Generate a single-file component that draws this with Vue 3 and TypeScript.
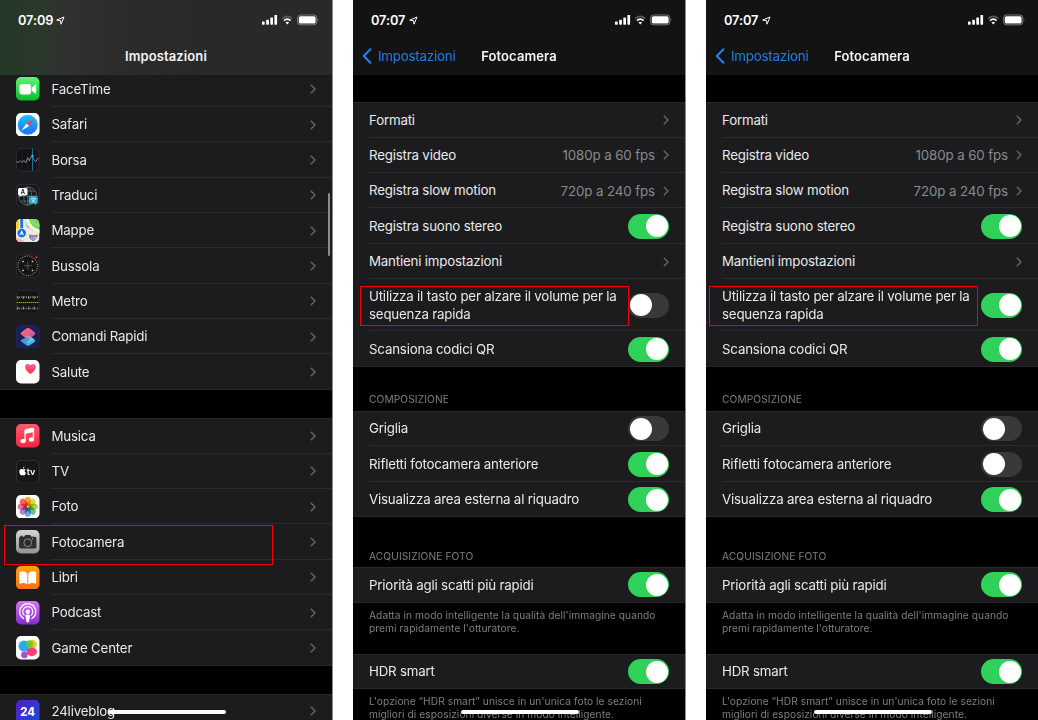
<script setup lang="ts">
interface SettingRow {
  label: string
  value?: string
  on?: boolean
  kind: 'link' | 'toggle'
  tall?: boolean
}

interface Section {
  key: string
  title?: string
  footer?: string[]
  rows: SettingRow[]
}

interface AppEntry {
  name: string
  icon: string
}

const appGroups: { key: string; apps: AppEntry[] }[] = [
  {
    key: 'first',
    apps: [
      { name: 'FaceTime', icon: 'facetime' },
      { name: 'Safari', icon: 'safari' },
      { name: 'Borsa', icon: 'stocks' },
      { name: 'Traduci', icon: 'translate' },
      { name: 'Mappe', icon: 'maps' },
      { name: 'Bussola', icon: 'compass' },
      { name: 'Metro', icon: 'measure' },
      { name: 'Comandi Rapidi', icon: 'shortcuts' },
      { name: 'Salute', icon: 'health' },
    ],
  },
  {
    key: 'second',
    apps: [
      { name: 'Musica', icon: 'music' },
      { name: 'TV', icon: 'tv' },
      { name: 'Foto', icon: 'photos' },
      { name: 'Fotocamera', icon: 'camera' },
      { name: 'Libri', icon: 'books' },
      { name: 'Podcast', icon: 'podcast' },
      { name: 'Game Center', icon: 'games' },
    ],
  },
  { key: 'third', apps: [{ name: '24liveblog', icon: 'liveblog' }] },
]

const petals = [
  { angle: 0, color: '#fba01c' },
  { angle: 45, color: '#e2d32c' },
  { angle: 90, color: '#9ccb45' },
  { angle: 135, color: '#55b98f' },
  { angle: 180, color: '#5b9fdc' },
  { angle: 225, color: '#9a7cc4' },
  { angle: 270, color: '#e4648c' },
  { angle: 315, color: '#f2553c' },
]

const link = (label: string, value?: string): SettingRow => ({ label, value, kind: 'link' })
const toggle = (label: string, on: boolean, tall = false): SettingRow => ({ label, on, tall, kind: 'toggle' })

function cameraSections(volumeBurst: boolean, mirror: boolean): Section[] {
  return [
    {
      key: 'general',
      rows: [
        link('Formati'),
        link('Registra video', '1080p a 60 fps'),
        link('Registra slow motion', '720p a 240 fps'),
        toggle('Registra suono stereo', true),
        link('Mantieni impostazioni'),
        toggle('Utilizza il tasto per alzare il volume per la sequenza rapida', volumeBurst, true),
        toggle('Scansiona codici QR', true),
      ],
    },
    {
      key: 'composition',
      title: 'COMPOSIZIONE',
      rows: [
        toggle('Griglia', false),
        toggle('Rifletti fotocamera anteriore', mirror),
        toggle('Visualizza area esterna al riquadro', true),
      ],
    },
    {
      key: 'capture',
      title: 'ACQUISIZIONE FOTO',
      rows: [toggle('Priorità agli scatti più rapidi', true)],
      footer: ["Adatta in modo intelligente la qualità dell'immagine quando", "premi rapidamente l'otturatore."],
    },
    {
      key: 'hdr',
      rows: [toggle('HDR smart', true)],
      footer: ["L'opzione “HDR smart” unisce in un'unica foto le sezioni", 'migliori di esposizioni diverse in modo intelligente.'],
    },
  ]
}

const phones = [
  { key: 'list', time: '07:09', sections: [] as Section[] },
  { key: 'before', time: '07:07', sections: cameraSections(false, true) },
  { key: 'after', time: '07:07', sections: cameraSections(true, false) },
]
</script>

<template>
  <main class="board">
    <section v-for="phone in phones" :key="phone.key" class="phone" :class="phone.key">
      <header class="top">
        <div class="status">
          <span class="time">{{ phone.time }}</span>
          <svg class="arrow" viewBox="0 0 9 9"><path d="M.7 4.1 8 1 5 8.2 4.5 4.7Z" fill="none" stroke="#fff" stroke-width="1" stroke-linejoin="round" /></svg>
          <svg class="radios" viewBox="0 0 58 12">
            <g fill="#fff">
              <rect x="0" y="7.5" width="2.7" height="3.2" rx=".6" />
              <rect x="4.2" y="5.7" width="2.7" height="5" rx=".6" />
              <rect x="8.3" y="3.4" width="2.7" height="7.3" rx=".6" />
              <rect x="12.4" y="1" width="2.7" height="9.7" rx=".6" />
            </g>
            <path d="M20.3 4.7q5-4.5 10 0" fill="none" stroke="#5a5a5b" stroke-width="1.6" />
            <path d="M22 6.7q3.3-3 6.6 0" fill="none" stroke="#fff" stroke-width="1.6" />
            <path d="M23.5 8.6q1.8-1.5 3.6 0l-1.8 1.9z" fill="#fff" />
            <rect x="35.6" y="1" width="19.2" height="9.8" rx="2.8" fill="none" stroke="#858586" stroke-width=".9" />
            <rect x="36.8" y="2.2" width="16.8" height="7.4" rx="1.6" fill="#fff" />
            <path d="M55.8 4.2q1.3 1.6 0 3.2z" fill="#858586" />
          </svg>
        </div>
        <div class="nav">
          <div v-if="phone.key !== 'list'" class="back">
            <svg viewBox="0 0 10 16"><path d="M8.4 1.3 1.8 8l6.6 6.7" fill="none" stroke="#1f84f5" stroke-width="2" stroke-linecap="round" stroke-linejoin="round" /></svg>
            <span>Impostazioni</span>
          </div>
          <h1>{{ phone.key === 'list' ? 'Impostazioni' : 'Fotocamera' }}</h1>
        </div>
      </header>

      <div v-if="phone.key === 'list'" class="content">
        <ul v-for="group in appGroups" :key="group.key" class="group apps" :class="group.key">
          <li v-for="app in group.apps" :key="app.name" class="row">
            <svg class="icon" viewBox="0 0 70 70">
              <template v-if="app.icon === 'facetime'">
                <defs><linearGradient id="gFace" x2="0" y2="1"><stop stop-color="#5df777" /><stop offset="1" stop-color="#0abd29" /></linearGradient></defs>
                <rect width="70" height="70" rx="15" fill="url(#gFace)" />
                <rect x="10" y="21" width="35" height="31" rx="9" fill="#fff" />
                <path d="M47 32 58 22q2-1 2 2v24q0 3-2 2L47 41z" fill="#fff" />
              </template>
              <template v-else-if="app.icon === 'safari'">
                <defs><linearGradient id="gSaf" x2="0" y2="1"><stop stop-color="#1bc4fa" /><stop offset="1" stop-color="#1a6df0" /></linearGradient></defs>
                <rect width="70" height="70" rx="15" fill="#fff" />
                <circle cx="35" cy="35" r="30" fill="url(#gSaf)" />
                <circle cx="35" cy="35" r="27" fill="none" stroke="#a9dcff" stroke-width="3" stroke-dasharray="1 3" opacity=".4" />
                <path d="M54 17 31 31l8 8z" fill="#fb3d3d" />
                <path d="M16 53 31 31l8 8z" fill="#fff" />
              </template>
              <template v-else-if="app.icon === 'stocks'">
                <rect x="1" y="1" width="68" height="68" rx="15" fill="#111214" stroke="#3b3b3d" stroke-width="2" />
                <path d="M18 2v66M34 2v66M62 6v58" stroke="#292a2c" stroke-width="2" />
                <path d="M1 42h7l5-4 5 5 5-6 6 7 6-15 5 9 4-11 5-1 5 10 5 5 4-8 5-3" fill="none" stroke="#b6b6b8" stroke-width="2" />
                <path d="M49 2v66" stroke="#167ca3" stroke-width="3" /><circle cx="49" cy="24" r="4" fill="#2cb2e5" />
              </template>
              <template v-else-if="app.icon === 'translate'">
                <rect x="1" y="1" width="68" height="68" rx="15" fill="#17181a" stroke="#3b3b3d" stroke-width="2" />
                <g fill="none" stroke="#5f8490" stroke-width="2"><circle cx="35" cy="36" r="27" /><ellipse cx="35" cy="36" rx="12" ry="27" /><path d="M35 9v54M8 36h54M13 21h44M13 51h44" /></g>
                <path d="M11 12h18q5 0 5 5v12q0 5-5 5H17l-7 5 1-5q-5 0-5-5V17q0-5 5-5z" fill="#fff" />
                <text x="14" y="30" class="mini-a">A</text>
                <path d="M43 36h17q5 0 5 5v13q0 5-5 5l1 5-7-5H43q-5 0-5-5V41q0-5 5-5z" fill="#32acc9" />
                <path d="M45 44h14M52 40v4M47 54q8-2 10-10M47 46q3 6 10 8" fill="none" stroke="#e5faff" stroke-width="2" />
              </template>
              <template v-else-if="app.icon === 'maps'">
                <defs><clipPath id="cMap"><rect width="70" height="70" rx="15" /></clipPath></defs>
                <g clip-path="url(#cMap)">
                  <rect width="70" height="70" fill="#eeeae0" />
                  <path d="M0 0h12v30H0z" fill="#fcd036" /><path d="M26 0h44v42L50 36 32 23z" fill="#77d35b" />
                  <path d="M32-3Q38 31 73 38" fill="none" stroke="#e9f7dc" stroke-width="11" />
                  <path d="M44-4Q49 17 73 21" fill="none" stroke="#8bdd74" stroke-width="7" />
                  <path d="M17 0v40" stroke="#fff" stroke-width="14" /><path d="M17 0v40" stroke="#167be8" stroke-width="9" />
                  <path d="M0 56q16 2 26 14H0z" fill="#f4abc2" />
                  <circle cx="17" cy="42" r="14" fill="#1672df" stroke="#fff" stroke-width="2" /><path d="m17 33 7 16-7-4-7 4z" fill="#fff" />
                  <path d="M38 48q3-5 6-2 8 4 15 0 4-2 6 2 1 13-14 19-14-6-13-19z" fill="#3e80d5" stroke="#fff" stroke-width="1.5" /><path d="M40 50h24" stroke="#ef655d" stroke-width="5" /><path d="M46 54v7M50 54h4v3h-4v4h4M60 54h-3v7h3z" stroke="#fff" stroke-width="1.5" fill="none" />
                </g>
              </template>
              <template v-else-if="app.icon === 'compass'">
                <rect x="1" y="1" width="68" height="68" rx="15" fill="#151516" stroke="#3b3b3d" stroke-width="2" />
                <circle cx="35" cy="35" r="29" fill="none" stroke="#a8a8a9" stroke-width="3" stroke-dasharray="3 4" />
                <path d="M35 23v24M23 35h24" stroke="#737375" stroke-width="2" />
                <g fill="#c9c9ca"><circle cx="21" cy="22" r="2.5" /><circle cx="49" cy="22" r="2.5" /><circle cx="21" cy="49" r="2.5" /><circle cx="49" cy="49" r="2.5" /></g>
                <path d="m56 8 7-1v8z" fill="#f6353b" />
              </template>
              <template v-else-if="app.icon === 'measure'">
                <rect x="1" y="1" width="68" height="68" rx="15" fill="#151516" stroke="#3b3b3d" stroke-width="2" />
                <path d="M4 21h63M4 55h63" stroke="#a9a9ab" stroke-width="5" stroke-dasharray="2 3.4" />
                <path d="M6 19v8M22 19v8M38 19v8M54 19v8M6 49v9M22 49v9M38 49v9M54 49v9" stroke="#cecece" stroke-width="2" />
                <path d="M3 37h64" stroke="#d3a02b" stroke-width="3" stroke-dasharray="4 2" />
              </template>
              <template v-else-if="app.icon === 'shortcuts'">
                <defs>
                  <linearGradient id="gSh1" x2="1" y2="1"><stop stop-color="#fb7865" /><stop offset=".55" stop-color="#df5a91" /><stop offset="1" stop-color="#a951d8" /></linearGradient>
                  <linearGradient id="gSh2" x2="1"><stop stop-color="#2a8ce9" /><stop offset="1" stop-color="#46d2c0" /></linearGradient>
                </defs>
                <rect x="1" y="1" width="68" height="68" rx="15" fill="#1c1d59" stroke="#2b2d62" stroke-width="2" />
                <path d="M17 43q-6 4 0 8l15 10q4 2 8 0l15-10q5-4 0-8L41 32z" fill="url(#gSh2)" />
                <path d="m32 10-15 11q-6 5 0 9l19 14 19-14q5-5 0-9L40 10q-4-2-8 0z" fill="url(#gSh1)" />
                <path d="m35 31 18 11-14 11q-5 2-8-1l12-9-16-10z" fill="#85cfdc" opacity=".7" />
              </template>
              <template v-else-if="app.icon === 'health'">
                <defs><linearGradient id="gHe" x2="0" y2="1"><stop stop-color="#ff61a5" /><stop offset="1" stop-color="#fb2f3d" /></linearGradient></defs>
                <rect width="70" height="70" rx="15" fill="#fff" />
                <path d="M43 42Q27 31 27 21q0-9 8-9 5 0 8 4 3-4 8-4 8 0 8 9 0 10-16 21z" fill="url(#gHe)" />
              </template>
              <template v-else-if="app.icon === 'music'">
                <defs><linearGradient id="gMu" x2="0" y2="1"><stop stop-color="#fc5b70" /><stop offset="1" stop-color="#fa243e" /></linearGradient></defs>
                <rect width="70" height="70" rx="15" fill="url(#gMu)" />
                <path d="M27 51V22q0-4 4-5l18-4q3 0 3 3v29" fill="none" stroke="#fff" stroke-width="4" /><path d="M26 18 53 12v12l-27 6z" fill="#fff" />
                <ellipse cx="21" cy="51" rx="8" ry="6.5" fill="#fff" /><ellipse cx="46" cy="46" rx="8" ry="6.5" fill="#fff" />
              </template>
              <template v-else-if="app.icon === 'tv'">
                <rect x="1" y="1" width="68" height="68" rx="15" fill="#161617" stroke="#444446" stroke-width="2" />
                <path d="M20 26q5 0 5-6-5 1-5 6zm0 2q-3-2-6-1-6 3-4 11 3 8 7 8l3-1 4 1q4-1 6-7-5-3-4-7 0-2 3-4-4-3-9 0z" fill="#fff" />
                <text x="32" y="46" class="tv-mark">tv</text>
              </template>
              <template v-else-if="app.icon === 'photos'">
                <rect width="70" height="70" rx="15" fill="#fff" />
                <g class="flower"><rect v-for="p in petals" :key="p.angle" x="26" y="5" width="18" height="28" rx="9" :fill="p.color" :transform="`rotate(${p.angle} 35 35)`" opacity=".9" /></g>
              </template>
              <template v-else-if="app.icon === 'camera'">
                <defs><linearGradient id="gCam" x2="0" y2="1"><stop stop-color="#d5d5d6" /><stop offset="1" stop-color="#929294" /></linearGradient></defs>
                <rect width="70" height="70" rx="15" fill="url(#gCam)" />
                <path d="M13 20v-3h7v3h4l4-5h14l4 5h10q5 0 5 5v25q0 5-5 5H14q-5 0-5-5V25q0-4 4-5z" fill="#303033" />
                <circle cx="35" cy="38" r="11.5" fill="#29292b" stroke="#a0a0a2" stroke-width="2.4" /><circle cx="49" cy="26" r="2" fill="#eba72c" />
              </template>
              <template v-else-if="app.icon === 'books'">
                <defs><linearGradient id="gBo" x2="0" y2="1"><stop stop-color="#ffa20b" /><stop offset="1" stop-color="#fb6e14" /></linearGradient></defs>
                <rect width="70" height="70" rx="15" fill="url(#gBo)" />
                <path d="M33.5 22Q23 11 10 18v35q14-5 23.5 1zM36.5 22Q47 11 60 18v35q-14-5-23.5 1z" fill="#fff" />
              </template>
              <template v-else-if="app.icon === 'podcast'">
                <defs><linearGradient id="gPo" x2="0" y2="1"><stop stop-color="#d775f6" /><stop offset="1" stop-color="#852bc9" /></linearGradient></defs>
                <rect width="70" height="70" rx="15" fill="url(#gPo)" />
                <g fill="none" stroke="#fff" stroke-width="3.6"><path d="M24 53a24 24 0 1 1 22 0" /><path d="M25 43a15 15 0 1 1 20 0" /></g>
                <circle cx="35" cy="32" r="6.5" fill="#fff" /><path d="M28 44q0-4 7-4t7 4l-3 16q-1 4-4 4t-4-4z" fill="#fff" />
              </template>
              <template v-else-if="app.icon === 'games'">
                <rect width="70" height="70" rx="15" fill="#fff" />
                <circle cx="49" cy="25" r="13" fill="#f6c526" /><circle cx="25" cy="56" r="10" fill="#a84ee0" />
                <circle cx="24" cy="30" r="16.5" fill="#27a9f3" /><circle cx="40" cy="24" r="11" fill="#5dcb30" opacity=".85" />
                <ellipse cx="47" cy="47" rx="15.5" ry="13" fill="#fc3f71" />
              </template>
              <template v-else>
                <defs><linearGradient id="gLb" x2="1" y2="1"><stop stop-color="#541bc9" /><stop offset="1" stop-color="#1650d8" /></linearGradient></defs>
                <rect width="70" height="70" rx="15" fill="url(#gLb)" />
                <text x="35" y="49" class="lb-mark">24</text>
              </template>
            </svg>
            <div class="cell">
              <span class="label">{{ app.name }}</span>
              <svg class="chevron" viewBox="0 0 6 10"><path d="m.8.8 4.2 4.2-4.2 4.2" /></svg>
            </div>
          </li>
        </ul>
        <i class="scrollbar"></i>
      </div>

      <div v-else class="content">
        <div v-for="section in phone.sections" :key="section.key" class="section" :class="section.key">
          <h2 v-if="section.title">{{ section.title }}</h2>
          <ul class="group">
            <li v-for="row in section.rows" :key="row.label" class="row" :class="{ tall: row.tall }">
              <div class="cell">
                <span class="label">{{ row.label }}</span>
                <span v-if="row.value" class="value">{{ row.value }}</span>
                <svg v-if="row.kind === 'link'" class="chevron" viewBox="0 0 6 10"><path d="m.8.8 4.2 4.2-4.2 4.2" /></svg>
                <span v-else class="switch" :class="{ on: row.on }"><i></i></span>
              </div>
            </li>
          </ul>
          <p v-if="section.footer"><span v-for="line in section.footer" :key="line">{{ line }}</span></p>
        </div>
      </div>

      <i class="marker"></i>
      <i class="home"></i>
    </section>
  </main>
</template>

<style>
body {
  margin: 0;
  background: #fff;
  overflow: hidden;
}
</style>

<style scoped>
.board {
  display: flex;
  gap: 20px;
  width: 1039px;
  height: 720px;
  overflow: hidden;
  font-family: Inter, "Liberation Sans", sans-serif;
  color: #e9e9ea;
}
.phone {
  position: relative;
  box-sizing: border-box;
  flex: 0 0 333px;
  height: 720px;
  display: flex;
  flex-direction: column;
  overflow: hidden;
  background: #000;
  border-right: 1px solid #8b8b8c;
}
.top {
  position: relative;
  z-index: 1;
  flex: 0 0 74.5px;
  display: flex;
  flex-direction: column;
  background: #131313;
}
.list .top {
  background: linear-gradient(90deg, #253727 0, #29382a 38px, #303230 62px, #2c2c2d 110px, #29292a 200px, #29292a);
}
.status {
  display: flex;
  align-items: center;
  box-sizing: border-box;
  height: 40px;
  padding: 0 12px 0 18px;
}
.time {
  font-size: 12.8px;
  font-weight: 600;
  letter-spacing: -0.1px;
  color: #fff;
  width: 38px;
}
.arrow {
  width: 9px;
  height: 9px;
}
.radios {
  width: 58px;
  height: 12px;
  margin-left: auto;
}
.nav {
  position: relative;
  display: flex;
  align-items: center;
  justify-content: center;
  height: 32px;
}
h1 {
  margin: 0;
  font-size: 13px;
  font-weight: 600;
  letter-spacing: 0.1px;
  color: #f4f4f5;
}
.back {
  position: absolute;
  left: 9px;
  top: 0;
  height: 32px;
  display: flex;
  align-items: center;
  gap: 6px;
  font-size: 13.3px;
  letter-spacing: -0.2px;
  color: #1f7fe8;
}
.back svg {
  width: 10px;
  height: 16px;
}
.content {
  flex: 1;
  min-height: 0;
}
ul {
  list-style: none;
  margin: 0;
  padding: 0;
}
.group {
  background: #1c1c1e;
  box-shadow: 0 -1px 0 #29292b inset, 0 1px 0 #29292b inset;
}
.first {
  margin-top: -3px;
}
.second {
  margin-top: 28.6px;
}
.third {
  margin-top: 27.8px;
}
.row {
  display: flex;
  align-items: center;
  height: 35.36px;
  padding-left: 16px;
}
.row.tall {
  height: 52.3px;
}
.icon {
  width: 23.5px;
  height: 23.5px;
  margin-right: 12px;
  flex: none;
}
.cell {
  flex: 1;
  min-width: 0;
  height: 100%;
  box-sizing: border-box;
  display: flex;
  align-items: center;
  border-bottom: 1px solid #2b2b2d;
  padding-right: 16px;
}
.row:last-child .cell {
  border-color: transparent;
}
.label {
  font-size: 13.3px;
  line-height: 17.7px;
  letter-spacing: -0.19px;
  padding-top: 2px;
  white-space: nowrap;
}
.tall .label {
  width: 256px;
  margin-right: -24px;
  white-space: normal;
}
.value {
  margin-left: auto;
  padding-top: 1px;
  font-size: 13.3px;
  letter-spacing: -0.1px;
  color: #8a8a8e;
  white-space: nowrap;
}
.chevron {
  width: 6px;
  height: 10px;
  margin-left: auto;
  margin-top: 1px;
  fill: none;
  stroke: #626266;
  stroke-width: 1.5;
}
.value + .chevron {
  margin-left: 8px;
}
.switch {
  box-sizing: border-box;
  width: 41.4px;
  height: 25px;
  margin-left: auto;
  margin-top: 1px;
  margin-right: -0.4px;
  padding: 1.5px;
  border-radius: 13px;
  background: #39393c;
  display: flex;
  flex: none;
}
.switch.on {
  background: #30d158;
  justify-content: flex-end;
}
.switch i {
  width: 22px;
  height: 22px;
  border-radius: 50%;
  background: #fff;
}
.general {
  padding-top: 27.9px;
}
h2 {
  margin: 0;
  padding-left: 16px;
  font-size: 10.2px;
  line-height: 14px;
  font-weight: 400;
  letter-spacing: 0.1px;
  color: #7f7f84;
}
.composition h2 {
  padding-top: 25.6px;
  padding-bottom: 4.7px;
}
.capture h2 {
  padding-top: 31.8px;
  padding-bottom: 4.3px;
}
p {
  margin: 0;
  padding: 6px 0 0 16px;
  font-size: 10.2px;
  line-height: 13px;
  letter-spacing: 0.06px;
  color: #7f7f84;
}
p span {
  display: block;
  white-space: nowrap;
}
.capture p {
  height: 45.3px;
}
.scrollbar {
  position: absolute;
  left: 328px;
  top: 193px;
  width: 2px;
  height: 63px;
  border-radius: 1px;
  background: #8c8c8e;
}
.marker {
  position: absolute;
  z-index: 2;
  box-sizing: border-box;
  left: 7px;
  top: 286px;
  width: 269px;
  height: 40px;
  border: 1px solid #f50000;
}
.list .marker {
  left: 4px;
  top: 525px;
}
.after .marker {
  left: 3px;
}
.home {
  position: absolute;
  z-index: 2;
  left: 107.5px;
  top: 709.5px;
  width: 118px;
  height: 4px;
  border-radius: 2px;
  background: #fff;
}
.mini-a {
  font: 700 17px Inter, sans-serif;
  fill: #222;
}
.tv-mark {
  font: 600 27px Inter, sans-serif;
  fill: #fff;
}
.lb-mark {
  font: 800 34px Inter, sans-serif;
  text-anchor: middle;
  fill: #fff;
}
.flower rect {
  mix-blend-mode: multiply;
}
</style>
